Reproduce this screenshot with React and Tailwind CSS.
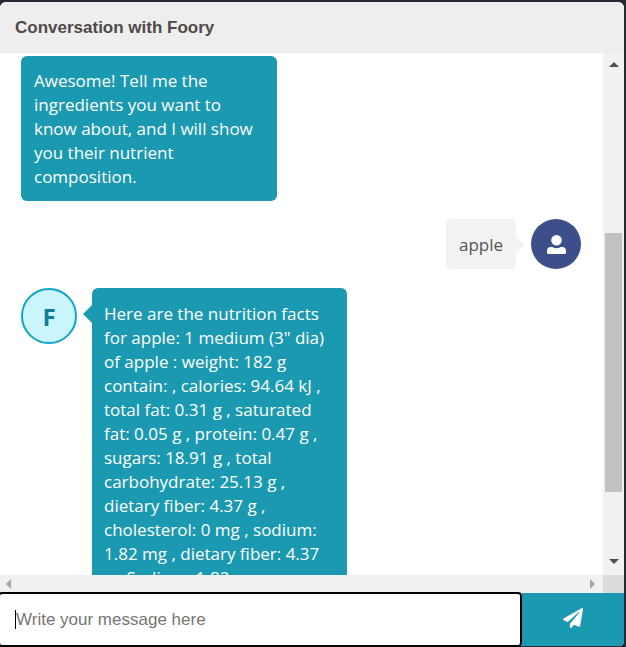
const lines1 = ["Awesome! Tell me the","ingredients you want to","know about, and I will show","you their nutrient","composition."];
const lines2 = ["Here are the nutrition facts","for apple: 1 medium (3\" dia)","of apple : weight: 182 g","contain: , calories: 94.64 kJ ,","total fat: 0.31 g , saturated","fat: 0.05 g , protein: 0.47 g ,","sugars: 18.91 g , total","carbohydrate: 25.13 g ,","dietary fiber: 4.37 g ,","cholesterol: 0 mg , sodium:","1.82 mg , dietary fiber: 4.37","g , Sodium: 1.82"];

export default function App() {
  return (
    <div className="h-[647px] w-[626px] bg-[#262833] pt-[2px] pr-[2px] pb-[1px] overflow-hidden font-['Open_Sans',sans-serif]">
      <div className="h-[644px] bg-white rounded-t-[6px] rounded-b-[5px] flex flex-col">
        <div className="h-[51px] shrink-0 bg-[#eeeeee] rounded-t-[6px] flex items-center pl-[15px] text-[17px] font-bold text-[#4e4a4a] font-['Liberation_Sans',sans-serif]">Conversation with Foory</div>
        <div className="flex flex-col h-[540px] shrink-0">
          <div className="flex h-[522px]">
            <div className="w-[603px] overflow-hidden text-[17px] leading-[24px]">
              <div className="pt-[3px] pl-[21px]">
                <div className="w-[256px] h-[145px] bg-[#1b99b0] rounded-[6px] pt-[13px] pl-[13px] text-white whitespace-nowrap">
                  {lines1.map(l => <div key={l}>{l}</div>)}
                </div>
              </div>
              <div className="flex justify-end items-center mt-[18px] pr-[22px]">
                <div className="relative w-[70px] h-[50px] bg-[#f2f2f2] rounded-[6px] flex items-center justify-center pt-[2px] text-[#555555]">
                  apple
                  <div className="absolute right-[-8px] top-[18px] w-0 h-0 border-y-[8px] border-y-transparent border-l-[8px] border-l-[#f2f2f2]" />
                </div>
                <div className="ml-[15px] w-[50px] h-[50px] rounded-full bg-[#3d4f8b] flex items-center justify-center">
                  <svg width="19" height="19" viewBox="0 0 19 19" fill="#fff"><circle cx="9.5" cy="5.3" r="5.3"/><path d="M4 12h1.2a8 8 0 0 0 8.600 0H15a4 4 0 0 1 4 4v1.500a1.500 1.500 0 0 1-1.500 1.500h-16A1.500 1.500 0 0 1 0 17.500V16a4 4 0 0 1 4-4z"/></svg>
                </div>
              </div>
              <div className="flex items-start mt-[19px] pl-[21px]">
                <div className="w-[56px] h-[56px] rounded-full bg-[#ccf6ff] border-2 border-[#0ea5cc] flex items-center justify-center pt-[2px] text-[#0e7f9e] text-[24px] font-bold">F</div>
                <div className="relative ml-[15px] w-[255px] bg-[#1b99b0] rounded-[6px] pt-[14px] pl-[12px] text-white whitespace-nowrap">
                  <div className="absolute left-[-9px] top-[17px] w-0 h-0 border-y-[9px] border-y-transparent border-r-[9px] border-r-[#1b99b0]" />
                  {lines2.map(l => <div key={l}>{l}</div>)}
                </div>
              </div>
            </div>
            <div className="w-[21px] bg-[#f1f1f1] flex flex-col items-center">
              <div className="mt-[9px] w-0 h-0 border-x-[5px] border-x-transparent border-b-[5px] border-b-[#505050]" />
              <div className="mt-[166px] w-[17px] h-[259px] bg-[#c1c1c1]" />
              <div className="mt-[67px] w-0 h-0 border-x-[5px] border-x-transparent border-t-[5px] border-t-[#505050]" />
            </div>
          </div>
          <div className="flex h-[18px]">
            <div className="w-[603px] bg-[#f1f1f1] flex items-center justify-between pl-[6px] pr-[8px]">
              <div className="w-0 h-0 border-y-[5px] border-y-transparent border-r-[5px] border-r-[#a3a3a3]" />
              <div className="w-0 h-0 border-y-[5px] border-y-transparent border-l-[5px] border-l-[#a3a3a3]" />
            </div>
            <div className="w-[21px] bg-[#dcdcdc]" />
          </div>
        </div>
        <div className="flex items-start h-[53px] shrink-0">
          <div className="relative -mt-[1px] -ml-[2px] w-[524px] h-[55px] shrink-0 bg-white border-2 border-black rounded-[4px] flex items-center pl-[15px] text-[17px] text-[#757575] font-['Liberation_Sans',sans-serif]">
            <span className="w-px h-[19px] bg-black" />Write your message here
          </div>
          <div className="flex-1 h-full bg-[#1b99b0] rounded-br-[5px] flex items-center justify-center pb-[3px]">
            <svg width="20" height="20" viewBox="0 0 512 512" fill="#fff"><path d="M476 3.200 12.500 270.600c-18.100 10.400-15.800 35.600 2.200 43.200L121 358.400l287.300-253.200c5.500-4.900 13.300 2.600 8.600 8.300L176 407v80.500c0 23.600 28.500 32.900 42.500 15.800L282 426l124.600 52.200c14.200 6 30.400-2.900 33-18.200l72-432C515 7.800 493.300-6.800 476 3.200z"/></svg>
          </div>
        </div>
      </div>
    </div>
  );
}
